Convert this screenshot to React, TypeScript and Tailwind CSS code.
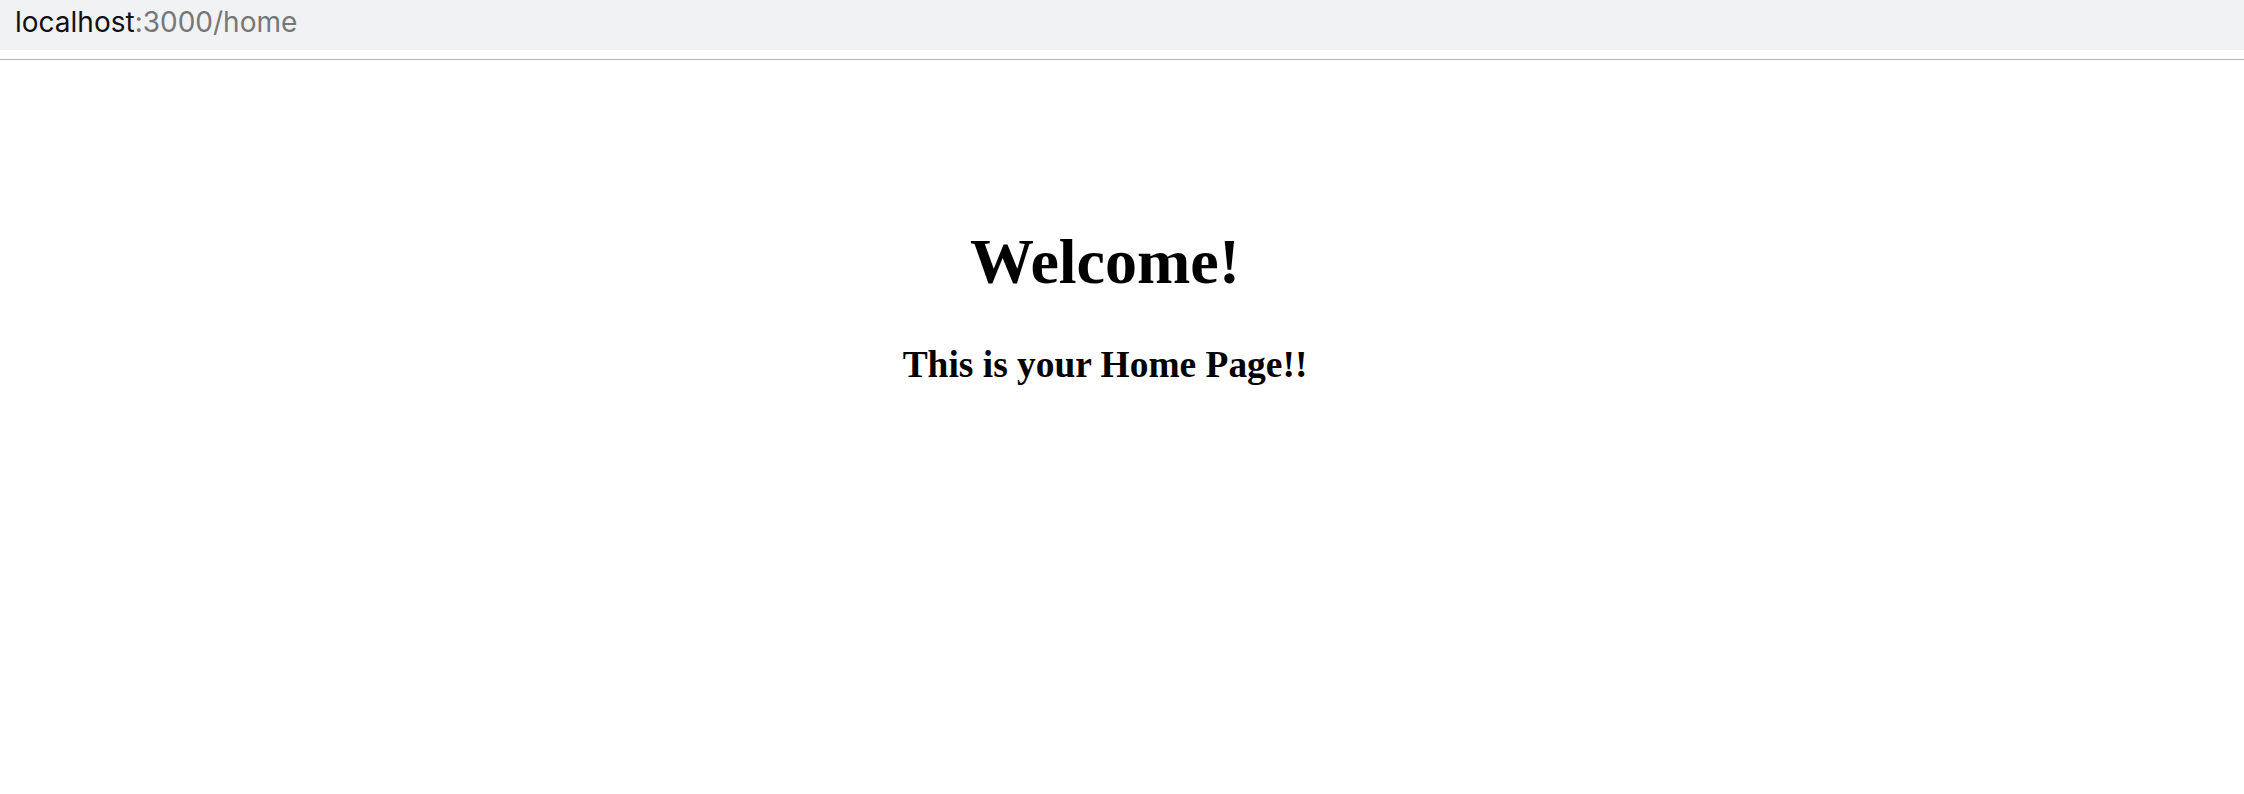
export default function App() {
  return (
    <div className="w-[2244px] h-[794px] bg-white overflow-hidden">
      <div className="h-[50px] bg-[#f1f2f4] flex items-start pl-[15px] pt-[2px]">
        <span className="text-[28px] leading-[40px] text-[#111]" style={{ fontFamily: "Inter, 'Noto Sans', sans-serif" }}>
          localhost<span className="text-[#777]">:3000/home</span>
        </span>
      </div>
      <div className="h-[9px] bg-white" />
      <div className="h-[1px] bg-[#b3b3b3]" />
      <div className="w-[2210px] flex flex-col items-center text-black" style={{ fontFamily: "'Liberation Serif', 'Times New Roman', serif" }}>
        <h1 className="mt-[165px] text-[64px] leading-[74px] font-bold">Welcome!</h1>
        <h3 className="mt-[44px] text-[37.44px] leading-[43px] font-bold">This is your Home Page!!</h3>
      </div>
    </div>
  );
}
